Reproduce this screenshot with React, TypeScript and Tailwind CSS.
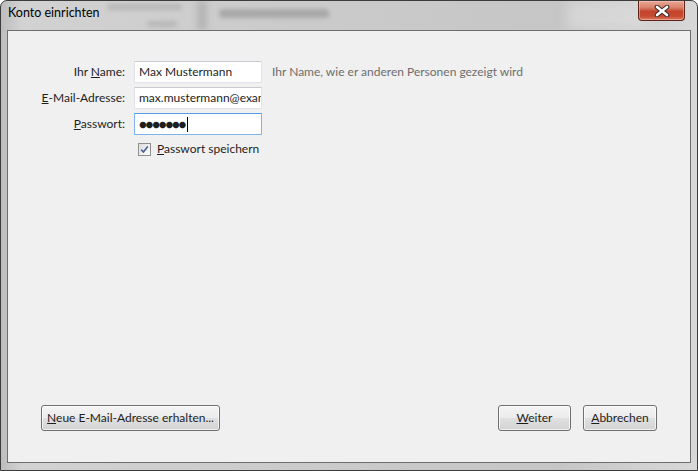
import React from "react";

function CloseButton() {
  return (
    <div className="absolute right-[6px] top-0 flex h-[20px] w-[47px] items-center justify-center rounded-b-[4px] border border-t-0 border-[#5c2418] bg-[linear-gradient(to_bottom,#e9a898_0%,#d9806a_35%,#c2442c_55%,#c74a31_80%,#dd7a60_100%)] shadow-[inset_0_0_0_1px_rgba(255,210,200,0.45)]">
      <svg width="16" height="12" viewBox="0 0 16 12">
        <path d="M3 2 L13 10 M13 2 L3 10" stroke="#3a2a2a" strokeWidth="4.6" strokeLinecap="round" />
        <path d="M3 2 L13 10 M13 2 L3 10" stroke="#ffffff" strokeWidth="2.6" strokeLinecap="round" />
      </svg>
    </div>
  );
}

function TitleBar() {
  return (
    <div className="relative h-[29px] shrink-0 overflow-hidden">
      <div className="absolute left-[100px] top-[3px] h-[6px] w-[75px] rounded bg-[#a9a9a9] opacity-60 blur-[2px]" />
      <div className="absolute left-[140px] top-[20px] h-[6px] w-[30px] rounded bg-[#a9a9a9] opacity-60 blur-[2px]" />
      <div className="absolute left-[190px] top-0 h-[29px] w-[10px] bg-[#9d9d9d] opacity-50 blur-[3px]" />
      <div className="absolute left-[212px] top-[8px] h-[9px] w-[110px] rounded bg-[#9a9a9a] opacity-70 blur-[2px]" />
      <div className="absolute left-[560px] top-0 h-[29px] w-[80px] bg-[#dedede] opacity-60 blur-[6px]" />
      <div className="relative pl-[1px] pt-[4px] text-[12.5px] leading-[16px] text-black">Konto einrichten</div>
      <CloseButton />
    </div>
  );
}

function Label({ children }: { children: React.ReactNode }) {
  return (
    <div className="flex h-[22px] items-center justify-end whitespace-nowrap text-[12px] text-[#1e1e1e]">
      <span>{children}</span>
    </div>
  );
}

function TextBox({ children, focused }: { children: React.ReactNode; focused?: boolean }) {
  return (
    <div
      className={
        "flex h-[22px] items-center overflow-hidden whitespace-nowrap border bg-white pl-[4px] text-[12px] text-[#1e1e1e] " +
        (focused ? "border-[#7eb4ea] border-t-[#569de5]" : "border-[#e2e3ea] border-t-[#c8cad1]")
      }
    >
      {children}
    </div>
  );
}

function Button({ children, className }: { children: React.ReactNode; className?: string }) {
  return (
    <div
      className={
        "flex h-[26px] items-center justify-center rounded-[3px] border border-[#707070] bg-[linear-gradient(to_bottom,#f4f4f4_0%,#ececec_48%,#e0e0e0_52%,#d2d2d2_100%)] text-[12px] text-[#1e1e1e] shadow-[inset_0_0_0_1px_rgba(255,255,255,0.7)] " +
        (className ?? "")
      }
    >
      {children}
    </div>
  );
}

export default function App() {
  return (
    <div
      className="relative flex h-[471px] w-[698px] flex-col overflow-hidden rounded-t-[7px] border border-[#3c3c3c] bg-[linear-gradient(to_right,#bdbdbd_0%,#d2d2d2_3%,#cbcbcb_40%,#c6c6c6_80%,#d8d8d8_100%)] px-[6px] pb-[7px]"
      style={{ fontFamily: 'Lato, "Segoe UI", sans-serif' }}
    >
      <TitleBar />
      <div className="flex flex-1 flex-col border border-[#6e6e6e] bg-[#f0f0f0]">
        <div className="grid grid-cols-[117px_137px_auto] gap-y-[4px] pt-[30px]">
          <Label>
            Ihr <u>N</u>ame:
          </Label>
          <div className="ml-[9px]">
            <TextBox>Max Mustermann</TextBox>
          </div>
          <div className="ml-[10px] flex h-[22px] items-center whitespace-nowrap text-[12px] text-[#6d6d6d]">
            Ihr Name, wie er anderen Personen gezeigt wird
          </div>

          <Label>
            <u>E</u>-Mail-Adresse:
          </Label>
          <div className="ml-[9px]">
            <TextBox>max.mustermann@example.com</TextBox>
          </div>
          <div />

          <Label>
            <u>P</u>asswort:
          </Label>
          <div className="ml-[9px]">
            <TextBox focused>
              <span className="text-[13px] font-bold leading-none tracking-[-1.2px]">●●●●●●●</span>
              <span className="ml-[2px] h-[15px] w-[1px] bg-black" />
            </TextBox>
          </div>
          <div />
        </div>

        <div className="ml-[130px] mt-[5px] flex items-center gap-[6px] text-[12px] text-[#1e1e1e]">
          <div className="flex h-[13px] w-[13px] items-center justify-center border border-[#8e8f8f] bg-[linear-gradient(to_bottom_right,#dcdcdc,#ffffff)]">
            <svg width="9" height="9" viewBox="0 0 9 9">
              <path d="M1.2 4.6 L3.4 7 L7.8 1.5" fill="none" stroke="#4a5f97" strokeWidth="1.6" />
            </svg>
          </div>
          <span>
            <u>P</u>asswort speichern
          </span>
        </div>

        <div className="flex-1" />

        <div className="flex items-center px-[33px] pb-[31px]">
          <Button className="w-[179px]">
            <span>
              <u>N</u>eue E-Mail-Adresse erhalten...
            </span>
          </Button>
          <div className="flex-1" />
          <Button className="w-[73px]">
            <span>
              <u>W</u>eiter
            </span>
          </Button>
          <Button className="ml-[12px] w-[74px]">
            <span>
              <u>A</u>bbrechen
            </span>
          </Button>
        </div>
      </div>
    </div>
  );
}
